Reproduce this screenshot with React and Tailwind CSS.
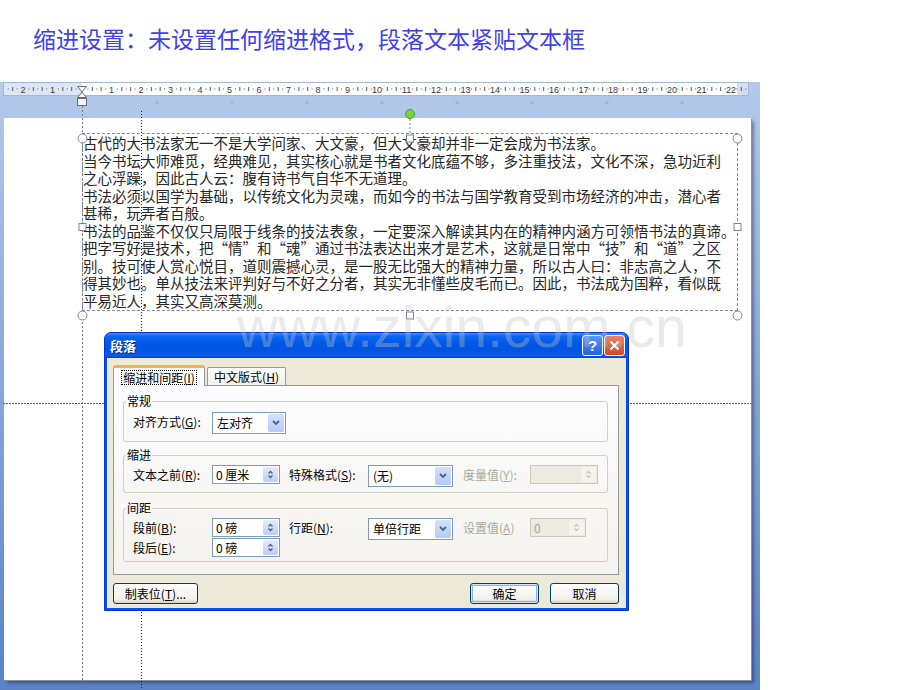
import React from "react";

const LINES = [
  "古代的大书法家无一不是大学问家、大文豪，但大文豪却并非一定会成为书法家。",
  "当今书坛大师难觅，经典难见，其实核心就是书者文化底蕴不够，多注重技法，文化不深，急功近利",
  "之心浮躁，因此古人云：腹有诗书气自华不无道理。",
  "书法必须以国学为基础，以传统文化为灵魂，而如今的书法与国学教育受到市场经济的冲击，潜心者",
  "甚稀，玩弄者百般。",
  "书法的品鉴不仅仅只局限于线条的技法表象，一定要深入解读其内在的精神内涵方可领悟书法的真谛。",
  "把字写好是技术，把“情”和“魂”通过书法表达出来才是艺术，这就是日常中“技”和“道”之区",
  "别。技可使人赏心悦目，道则震撼心灵，是一股无比强大的精神力量，所以古人曰：非志高之人，不",
  "得其妙也。单从技法来评判好与不好之分者，其实无非懂些皮毛而已。因此，书法成为国粹，看似既",
  "平易近人，其实又高深莫测。",
];

// ruler: 29.5px per cm, zero at the left margin
const U = 29.5;
const O = 79;

function Ruler() {
  const marks = [];
  for (let u = -3; u <= 23; u++) {
    [0.2, 0.35, 0.5, 0.65, 0.8].forEach((f, i) => {
      const x = O + U * (u + f);
      if (x < 2 || x > 744) return;
      if (i % 2 === 1) marks.push(<rect key={`${u}-${i}`} x={x - 0.5} y={5} width={1} height={4} />);
      else marks.push(<rect key={`${u}-${i}`} x={x - 0.5} y={6.5} width={1} height={1} />);
    });
  }
  const nums = [];
  for (let k = -2; k <= 22; k++) {
    if (k === 0) continue;
    nums.push(
      <text key={k} x={O + U * k} y={10.5} textAnchor="middle">
        {Math.abs(k)}
      </text>
    );
  }
  return (
    <div className="ml-[3px] mt-[5px] h-[14px] w-[746px]">
      <svg width="746" height="14" className="block">
        <rect x="0.5" y="0.5" width="745" height="13" fill="#ffffff" stroke="#a3b8d8" />
        <rect x="1" y="1" width="78" height="12" fill="#dce6f4" />
        <rect x="734" y="1" width="11" height="12" fill="#d3deef" />
        <g fill="#5a5a5a">{marks}</g>
        <g fontFamily="Liberation Sans, Arial, sans-serif" fontSize="9" fill="#3a3a3a">
          {nums}
        </g>
      </svg>
    </div>
  );
}

function Guides() {
  const tabs = [1, 2, 3, 4, 5, 6, 7, 8].map((k) => (
    <rect key={k} x={82 + 75 * k - 1.5} y={19} width={3} height={3} fill="#a9b5c8" />
  ));
  const circles = [
    [82.5, 56.5],
    [737.5, 56.5],
    [82.5, 233.5],
    [737.5, 233.5],
  ];
  const squares = [
    [410, 56.5],
    [410, 233.5],
    [82.5, 145],
    [737.5, 145],
  ];
  return (
    <svg className="pointer-events-none absolute left-0 top-0" width="760" height="613">
      {tabs}
      {/* indent marker */}
      <g fill="#f4f4f4" stroke="#6d6d6d" strokeWidth="1">
        <polygon points="77.5,4.5 86.5,4.5 82,10" />
        <polygon points="82,10 77.5,15.5 86.5,15.5" />
        <rect x="77.5" y="16.5" width="9" height="7" />
      </g>
      <line x1="82.5" y1="24" x2="82.5" y2="613" stroke="#7d7d7d" strokeDasharray="2 2" />
      <line x1="141.5" y1="29" x2="141.5" y2="613" stroke="#1a1a1a" strokeDasharray="1 2" />
      <line x1="3" y1="321.5" x2="751" y2="321.5" stroke="#606060" strokeDasharray="2 1" />
      {/* rotate handle */}
      <line x1="410" y1="37" x2="410" y2="53" stroke="#7a7a7a" strokeDasharray="2 2" />
      <circle cx="410" cy="32" r="4.5" fill="#78d23f" stroke="#4a9c27" />
      {circles.map(([x, y], i) => (
        <circle key={i} cx={x} cy={y} r="4.5" fill="#ffffff" stroke="#7b8497" />
      ))}
      {squares.map(([x, y], i) => (
        <rect key={i} x={x - 3.5} y={y - 3.5} width="7" height="7" fill="#ffffff" stroke="#7b8497" />
      ))}
    </svg>
  );
}

function Key({ k }) {
  return (
    <>
      (<span className="underline">{k}</span>)
    </>
  );
}

function DropBtn({ disabled }) {
  return (
    <span
      className={
        "my-[1px] mr-[1px] ml-auto flex w-[16px] items-center justify-center rounded-[2px] " +
        (disabled ? "bg-[#f3f2ec]" : "bg-[linear-gradient(#d3e0fd,#b4c9f6)]")
      }
    >
      <svg width="8" height="6">
        <path d="M1 1 L4 4 L7 1" fill="none" stroke={disabled ? "#c5c2b2" : "#4d6185"} strokeWidth="1.8" />
      </svg>
    </span>
  );
}

function SpinBtn({ disabled }) {
  const c = disabled ? "#c9c6b6" : "#4d6185";
  return (
    <span
      className={
        "my-[1px] mr-[1px] ml-auto flex w-[15px] items-center justify-center rounded-[2px] " +
        (disabled ? "bg-[#f3f2ec]" : "bg-[linear-gradient(#e3ebfd,#bccdf6)]")
      }
    >
      <svg width="7" height="11">
        <path d="M1.5 4.5 L3.5 2.5 L5.5 4.5" fill="none" stroke={c} strokeWidth="1.3" />
        <path d="M1.5 6.5 L3.5 8.5 L5.5 6.5" fill="none" stroke={c} strokeWidth="1.3" />
      </svg>
    </span>
  );
}

function Select({ w, children }) {
  return (
    <div className={"flex h-[22px] border border-[#7f9db9] bg-white " + w}>
      <span className="pl-[4px] leading-[20px]">{children}</span>
      <DropBtn />
    </div>
  );
}

function Spin({ w, value, disabled }) {
  return (
    <div
      className={
        "flex h-[19px] border " +
        w +
        (disabled ? " border-[#c9c7ba] bg-[#ecebe2] text-[#aca899]" : " border-[#7f9db9] bg-white")
      }
    >
      <span className="pl-[3px] leading-[17px]">{value}</span>
      <SpinBtn disabled={disabled} />
    </div>
  );
}

function Label({ children, disabled }) {
  return (
    <span className={"whitespace-nowrap leading-[19px] " + (disabled ? "text-[#aca899]" : "")}>{children}</span>
  );
}

function Group({ title, h, mt, children }) {
  return (
    <fieldset className={"ml-[9px] w-[485px] rounded-[3px] border border-[#d0d0bf] " + h + " " + mt}>
      <legend className="ml-[2px] px-[1px] text-[12px] leading-[14px]">{title}</legend>
      {children}
    </fieldset>
  );
}

const GRID = "grid grid-cols-[79px_77px_79px_95px_67px_auto] auto-rows-[19px] gap-y-[1px] items-start pl-[9px]";

function Button({ children, w, primary }) {
  return (
    <button
      className={
        "h-[21px] rounded-[3px] border border-[#003c74] bg-[linear-gradient(#ffffff,#f0efea_80%,#d8d2c6)] text-[12px] leading-[19px] text-black " +
        w +
        (primary ? " shadow-[inset_0_0_0_1px_#cee7ff,inset_0_0_0_2px_#8fb0e6]" : "")
      }
    >
      {children}
    </button>
  );
}

function Dialog() {
  return (
    <div className="absolute left-[104px] top-[332px] flex h-[279px] w-[525px] flex-col rounded-t-[7px] border border-[#0831d9] bg-[#0a55e0] text-[12px] text-black">
      <div className="flex h-[25px] items-center rounded-t-[6px] bg-[linear-gradient(#3d95ff_0%,#0a66f3_12%,#0058e6_40%,#0054e3_70%,#0a5fe8_90%,#0046c8_100%)] pl-[5px] pr-[3px]">
        <span className="text-[13px] font-bold text-white [text-shadow:1px_1px_0_#0a2a8a]">段落</span>
        <span className="ml-auto flex h-[21px] w-[21px] items-center justify-center rounded-[3px] border border-white bg-[linear-gradient(#5b97f7,#2461dc)] text-[15px] font-bold leading-none text-white font-['Liberation_Sans']">
          ?
        </span>
        <span className="ml-[1px] flex h-[21px] w-[21px] items-center justify-center rounded-[3px] border border-white bg-[linear-gradient(#ec8667,#d4451f)]">
          <svg width="11" height="11">
            <path d="M1.5 1.5 L9.5 9.5 M9.5 1.5 L1.5 9.5" stroke="#ffffff" strokeWidth="2.2" />
          </svg>
        </span>
      </div>
      <div className="mx-[2px] mb-[2px] flex-1 bg-[#ece9d8] pl-[6px] pr-[7px] pt-[7px]">
        <div className="relative z-10 flex h-[20px] items-end">
          <div className="-mb-[1px] flex h-[21px] w-[92px] items-center justify-center rounded-t-[3px] border-x border-t-[3px] border-x-[#919b9c] border-t-[#f5b43a] bg-[#fcfcfe]">
            <span className="border border-dotted border-black px-[1px] leading-[13px]">
              缩进和间距<Key k="I" />
            </span>
          </div>
          <div className="ml-[2px] flex h-[18px] w-[79px] items-center justify-center rounded-t-[2px] border border-b-0 border-[#919b9c] bg-[linear-gradient(#ffffff,#f1f0ea)]">
            中文版式<Key k="H" />
          </div>
        </div>
        <div className="h-[190px] w-[506px] border border-[#919b9c] bg-[linear-gradient(#fcfcfe,#f4f3ee)] pt-[8px]">
          <Group title="常规" h="h-[48px]" mt="">
            <div className={GRID + " mt-[4px]"}>
              <Label>
                对齐方式<Key k="G" />:
              </Label>
              <Select w="w-[74px]">左对齐</Select>
            </div>
          </Group>
          <Group title="缩进" h="h-[45px]" mt="mt-[6px]">
            <div className={GRID + " mt-[3px]"}>
              <Label>
                文本之前<Key k="R" />:
              </Label>
              <Spin w="w-[68px]" value="0 厘米" />
              <Label>
                特殊格式<Key k="S" />:
              </Label>
              <Select w="w-[85px]">(无)</Select>
              <Label disabled>
                度量值<Key k="Y" />:
              </Label>
              <Spin w="w-[68px]" value="" disabled />
            </div>
          </Group>
          <Group title="间距" h="h-[61px]" mt="mt-[8px]">
            <div className={GRID + " mt-[3px]"}>
              <Label>
                段前<Key k="B" />:
              </Label>
              <Spin w="w-[68px]" value="0 磅" />
              <Label>
                行距<Key k="N" />:
              </Label>
              <Select w="w-[85px]">单倍行距</Select>
              <Label disabled>
                设置值<Key k="A" />
              </Label>
              <Spin w="w-[56px]" value="0" disabled />
              <Label>
                段后<Key k="E" />:
              </Label>
              <Spin w="w-[68px]" value="0 磅" />
            </div>
          </Group>
        </div>
        <div className="mt-[8px] flex w-[506px]">
          <Button w="w-[85px]">
            制表位<Key k="T" />...
          </Button>
          <div className="ml-auto flex gap-[11px]">
            <Button w="w-[69px]" primary>
              确定
            </Button>
            <Button w="w-[69px]">取消</Button>
          </div>
        </div>
      </div>
    </div>
  );
}

export default function App() {
  return (
    <div lang="zh-CN" className="relative h-[690px] w-[920px] overflow-hidden bg-white font-['Noto_Sans_CJK_SC',sans-serif]">
      <div className="flex h-[77px] items-center pl-[33px] text-[23px] text-[#3f3ff0]">
        缩进设置：未设置任何缩进格式，段落文本紧贴文本框
      </div>

      <div className="relative h-[613px] w-[760px] bg-[linear-gradient(#b4caea,#5a82c4)]">
        <Ruler />
        <div className="ml-[4px] mt-[22px] h-[562px] w-[747px] bg-white pl-[78px] pt-[15px] shadow-[1px_1px_0_#8a8f99,3px_3px_3px_rgba(0,0,40,0.35)]">
          <div className="h-[178px] w-[656px] border border-dashed border-[#7c8aa6] text-[14.5px] leading-[17.5px] text-[#262626]">
            {LINES.map((l, i) => (
              <div key={i} className="whitespace-nowrap">
                {l}
              </div>
            ))}
          </div>
        </div>
        <Guides />
      </div>

      <Dialog />

      <div className="pointer-events-none absolute left-[237px] top-[299px] whitespace-nowrap font-['Liberation_Sans',sans-serif] text-[57px] leading-[57px] text-[#c4c4c4]/35">
        www.zixin.com.cn
      </div>
    </div>
  );
}
